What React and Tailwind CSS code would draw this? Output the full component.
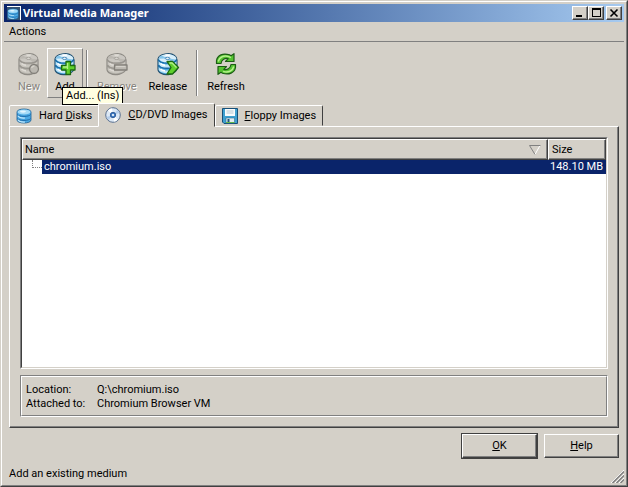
import React, { useState } from 'react';

const RAISED = 'border border-t-white border-l-white border-r-[#404040] border-b-[#404040]';

const palettes = {
    color: { line: '#24506f', top: '#d9effa', band: '#c3e6f8', shine: '#ffffff', side: '#4ba9df', dark: '#1a6ca8', mark: '#5fd02c', markShine: '#b4f08a', markLine: '#1c6a10' },
    gray: { line: '#8e8b85', top: '#cac7c1', band: '#c9c6bf', shine: '#dedbd5', side: '#b0ada6', dark: '#98958f', mark: '#bbb8b1', markShine: '#d4d1ca', markLine: '#827f79' },
};

const marks = {
    plus: 'M13 9.500h4.500v4h4.500v4.500h-4.500v4.500H13V18H8.500v-4.500H13z',
    minus: 'M9.500 13h12.500v5H9.500z',
    arrow: 'M11 9.500h5.500l6 6-6 6.500H11l4-6.500z',
    dot: 'M17 12.500a4.500 4.500 0 1 0 .01 0z',
};

const shines = {
    plus: 'M14.500 17v-6M10 15h4.500',
    minus: 'M11 14.500h9.500',
    arrow: 'M13.500 11h2.500l4.500 4.500',
    dot: 'M14.500 16a3 3 0 0 1 3-2',
};

const DiskIcon = ({ mark, gray, className }) => {
    const c = gray ? palettes.gray : palettes.color;
    return (
        <svg viewBox="0 0 24 24" className={className} aria-hidden="true">
            <path d="M2 7C3 2 14 0 18.500 3.500 20.500 5 21 6 21 8v9c-1 5-11 7-15.500 4.500C3 20.500 2 19 2 17z" fill={c.side} stroke={c.line} strokeWidth="1.200" />
            <path d="M2.700 9c2 5 15.500 4.500 17.700 0v3.500c-3 4.500-15 5-17.700.5zM2.700 15c2 5 15.500 4.500 17.700 0v2.500c-3 4.500-15 5-17.700.5z" fill={c.band} />
            <path d="M4.500 11.500c1 1 2.500 1.600 4.500 1.900M4.500 17c1 1 2.500 1.600 4.500 1.900" fill="none" stroke={c.shine} strokeWidth="1.600" />
            <path d="M2.500 13c2 4.500 15.500 4.500 18-.5M2.500 8c2 4 15.500 4 18 0" fill="none" stroke={c.dark} strokeWidth="1.500" />
            <ellipse cx="11.500" cy="6.300" rx="8.700" ry="4" fill={c.top} />
            <path d="M11.500 6.300 5.500 3.500C3.500 4.500 2.800 5.700 3 6.800zM11.500 6.300l8.300 1.200c-.8 1.300-2.300 2-4.300 2.400z" fill={c.side} opacity=".6" />
            <path d="M11.500 6.300 9 2.500c2-.3 4-.3 5.500 0z" fill={c.shine} />
            <ellipse cx="11.500" cy="6.300" rx="2.300" ry="1.100" fill={c.shine} stroke={c.dark} strokeWidth=".8" />
            {mark && <path d={marks[mark]} fill={c.mark} stroke={c.markLine} strokeWidth="1.300" strokeLinejoin="round" />}
            {mark && <path d={shines[mark]} fill="none" stroke={c.markShine} strokeWidth="1.300" />}
        </svg>
    );
};

// plain stack of platters, used where the icon is small
const StackIcon = ({ className }) => (
    <svg viewBox="0 0 16 16" className={className} aria-hidden="true">
        <path d="M1 4c0-4 14-4 14 0v8c0 4-14 4-14 0z" fill="#4ba9e4" stroke="#1c5e93" strokeWidth=".8" />
        <path d="M1.500 6.500c1 2.500 12 2.500 13 0M1.500 10.500c1 2.500 12 2.500 13 0" fill="none" stroke="#1a69a8" strokeWidth="1" />
        <path d="M2 7.800c1 2 5 2.300 7 2.200M2 11.800c1 2 5 2.300 7 2.200" fill="none" stroke="#c2e8fb" strokeWidth="1.200" />
        <ellipse cx="8" cy="4" rx="6.500" ry="2.500" fill="#a5dbf7" />
        <ellipse cx="7" cy="3.600" rx="3" ry="1.100" fill="#e2f5fe" />
    </svg>
);

const RefreshIcon = ({ className }) => (
    <svg viewBox="0 0 24 24" className={className} aria-hidden="true">
        <g fill="#55c431" stroke="#1c5c14" strokeWidth="1.200" strokeLinejoin="round">
            <path d="M2.500 11.500V8.500C3.500 3 9 .8 15.500 2.800l1.500.9 3-2V9.500h-8.500l2.700-2.800C11 5.800 7.500 7.500 7 11.500z" />
            <path d="M21.500 12.500v3c-1 5.500-6.500 7.700-13 5.700L7 20.300l-3 2V14.500h8.500l-2.700 2.800c3.200.9 6.700-.8 7.200-4.800z" />
        </g>
        <path d="M4.200 9.500C5.200 5 10 3 14.800 4.600l2.200 1M19.800 14.500c-1 4.500-5.800 6.500-10.600 4.900" fill="none" stroke="#b7f08d" strokeWidth="1.500" />
    </svg>
);

const CdIcon = () => (
    <svg viewBox="0 0 16 16" className="size-4" aria-hidden="true">
        <circle cx="8" cy="8" r="7.300" fill="#dce8f5" stroke="#5b7190" />
        <path d="M8 8 3 3.500A7 7 0 0 1 7 1.300zM8 8l5 4.500a7 7 0 0 1-4 2.200z" fill="#fff" />
        <path d="M8 8l6.500-2a7 7 0 0 0-2-3zM8 8l-6.500 2a7 7 0 0 0 2 3z" fill="#b5cdea" />
        <circle cx="8" cy="8" r="2.700" fill="#3f7cc4" stroke="#254f8c" strokeWidth=".8" />
        <circle cx="8" cy="8" r="1.100" fill="#fff" />
    </svg>
);

const FloppyIcon = () => (
    <svg viewBox="0 0 16 16" className="size-4" aria-hidden="true">
        <path d="M.5.500h15v15H2l-1.500-1.500z" fill="#3fa0d0" stroke="#174f78" />
        <path d="M3 1h10v7H3z" fill="#f8fbfd" />
        <path d="M4.500 3h7M4.500 5h7" stroke="#b4c6d0" />
        <path d="M4 10h8.500v5H4z" fill="#e4ecf0" stroke="#2b6e94" strokeWidth=".6" />
        <path d="M5.500 11h2v3.500h-2z" fill="#1c5478" />
        <path d="M4 14h8.500v1H4z" fill="#62b84a" />
    </svg>
);

const ToolButton = ({ label, icon, disabled, hot, children }) => (
    <div className="relative">
        <button
            type="button"
            disabled={disabled}
            className={`flex h-[50px] min-w-9 flex-col items-center gap-[3px] border px-[5px] pt-[3px] ${
                hot ? 'border-t-white border-l-white border-r-[#808080] border-b-[#808080]' : 'border-transparent'
            } ${disabled ? 'text-[#87847e] [text-shadow:1px_1px_0_#fff]' : ''}`}
        >
            {icon}
            <span className="leading-4">{label}</span>
        </button>
        {children}
    </div>
);

const Separator = () => <div className="mx-[3px] h-[46px] w-[2px] border-l border-r border-l-[#808080] border-r-white" />;

const tabs = [
    { id: 'hd', before: 'Hard ', key: 'D', after: 'isks', icon: <StackIcon className="size-4" /> },
    { id: 'cd', before: '', key: 'C', after: 'D/DVD Images', icon: <CdIcon /> },
    { id: 'fd', before: '', key: 'F', after: 'loppy Images', icon: <FloppyIcon /> },
];

const CaptionButton = ({ label, children }) => (
    <button type="button" aria-label={label} className={`h-[14px] w-4 bg-[#d4d0c8] shadow-[inset_-1px_-1px_0_#808080] ${RAISED}`}>
        <svg viewBox="0 0 14 12" className="h-3 w-[14px]" fill="none" stroke="#000" shapeRendering="crispEdges">
            {children}
        </svg>
    </button>
);

const App = () => {
    const [active, setActive] = useState('cd');

    return (
        <div className="flex min-h-screen flex-col border border-t-[#d4d0c8] border-l-[#d4d0c8] border-r-[#404040] border-b-[#404040] bg-[#d4d0c8] font-[Roboto,'Liberation_Sans',sans-serif] text-[11px] leading-[14px] text-black">
            <div className="flex grow flex-col border border-t-white border-l-white border-r-[#808080] border-b-[#808080] p-[2px]">
                <header className="flex h-[18px] items-center bg-linear-to-r from-[#0a246a] to-[#a6caf0] pr-[2px] pl-[3px]">
                    <span className="mr-[2px] flex size-[14px] items-center border-t border-r border-white bg-[#33506f]">
                        <StackIcon className="size-3" />
                    </span>
                    <h1 className="grow font-['Noto_Sans',sans-serif] font-bold text-white">Virtual Media Manager</h1>
                    <CaptionButton label="Minimize"><path d="M3 9h6" strokeWidth="2" /></CaptionButton>
                    <CaptionButton label="Maximize"><path d="M3 2h9M3.500 1v9M11.500 1v9M3 9.500h9" /><path d="M3 1.500h9" /></CaptionButton>
                    <span className="w-[2px]" />
                    <CaptionButton label="Close"><path d="M3.500 2.500l7 7M10.500 2.500l-7 7" strokeWidth="1.600" shapeRendering="auto" /></CaptionButton>
                </header>

                <nav className="flex h-5 items-center border-b border-[#808080] px-[5px]">
                    <button type="button">Actions</button>
                </nav>

                <div className="flex items-center pt-[6px] pl-[7px]">
                    <ToolButton label="New" disabled icon={<DiskIcon gray mark="dot" className="size-6" />} />
                    <ToolButton label="Add" hot icon={<DiskIcon mark="plus" className="size-6" />}>
                        <div role="tooltip" className="absolute top-[39px] left-[15px] z-10 border border-black bg-[#ffffe1] px-[3px] leading-4 whitespace-nowrap">
                            Add... (Ins)
                        </div>
                    </ToolButton>
                    <Separator />
                    <ToolButton label="Remove" disabled icon={<DiskIcon gray mark="minus" className="size-6" />} />
                    <ToolButton label="Release" icon={<DiskIcon mark="arrow" className="size-6" />} />
                    <Separator />
                    <ToolButton label="Refresh" icon={<RefreshIcon className="size-6" />} />
                </div>

                <main className="flex grow flex-col px-[5px] pt-[5px]">
                    <div role="tablist" className="flex items-end">
                        {tabs.map((tab) => (
                            <button
                                key={tab.id}
                                type="button"
                                role="tab"
                                aria-selected={active === tab.id}
                                onClick={() => setActive(tab.id)}
                                className={`flex items-center gap-[7px] rounded-t-[2px] border border-t-white border-l-white border-r-[#404040] bg-[#d4d0c8] ${
                                    active === tab.id ? 'relative z-10 -mb-px -ml-px h-6 border-b-[#d4d0c8] px-[6px]' : 'h-[21px] border-b-transparent px-[6px]'
                                }`}
                            >
                                {tab.icon}
                                <span>{tab.before}<u>{tab.key}</u>{tab.after}</span>
                            </button>
                        ))}
                    </div>

                    <section className={`flex grow flex-col gap-[6px] p-[10px] shadow-[inset_-1px_-1px_0_#808080] ${RAISED}`}>
                        <div className="flex grow flex-col border border-t-[#808080] border-l-[#808080] border-r-white border-b-white">
                            <div className="grow border border-t-[#404040] border-l-[#404040] border-r-[#d4d0c8] border-b-[#d4d0c8] bg-white">
                                <table className="w-full table-fixed border-separate border-spacing-0 text-left">
                                    <thead>
                                        <tr className="h-[21px] bg-[#d4d0c8]">
                                            <th className={`px-[2px] font-normal shadow-[inset_-1px_-1px_0_#808080] ${RAISED}`}>
                                                <div className="flex items-center justify-between">
                                                    Name
                                                    <svg viewBox="0 0 12 10" className="mr-1 h-[10px] w-3" fill="none" aria-hidden="true">
                                                        <path d="M11 .5 6 9.500" stroke="#fff" />
                                                        <path d="M11.500.500H.5L6 9.500" stroke="#808080" />
                                                    </svg>
                                                </div>
                                            </th>
                                            <th className={`w-[58px] px-[3px] font-normal shadow-[inset_-1px_-1px_0_#808080] ${RAISED}`}>Size</th>
                                        </tr>
                                    </thead>
                                    <tbody>
                                        <tr className="h-[14px] text-white">
                                            <td className="p-0">
                                                <div className="flex">
                                                    <span className="w-5 pl-[10px]">
                                                        <span className="block h-2 border-b border-l border-dotted border-[#808080]" />
                                                    </span>
                                                    <span className="grow bg-[#0a246a] pl-[2px]">chromium.iso</span>
                                                </div>
                                            </td>
                                            <td className="bg-[#0a246a] p-0 pr-[3px] text-right whitespace-nowrap">148.10 MB</td>
                                        </tr>
                                    </tbody>
                                </table>
                            </div>
                        </div>

                        <div className="border border-t-[#808080] border-l-[#808080] border-r-white border-b-white">
                            <dl className="grid grid-cols-[71px_1fr] border border-t-white border-l-white border-r-[#808080] border-b-[#808080] px-1 pt-[6px] pb-1">
                                <dt>Location:</dt>
                                <dd>Q:\chromium.iso</dd>
                                <dt>Attached to:</dt>
                                <dd>Chromium Browser VM</dd>
                            </dl>
                        </div>
                    </section>
                </main>

                <div className="flex justify-end gap-[6px] px-[5px] pt-[5px]">
                    <div className="border border-[#404040]">
                        <button type="button" className={`h-6 w-[75px] shadow-[inset_-1px_-1px_0_#808080] ${RAISED}`}><u>O</u>K</button>
                    </div>
                    <button type="button" className={`my-px h-6 w-[75px] shadow-[inset_-1px_-1px_0_#808080] ${RAISED}`}><u>H</u>elp</button>
                </div>

                <footer className="flex items-end justify-between pt-2 pl-[5px]">
                    <span className="pb-[2px]">Add an existing medium</span>
                    <svg viewBox="0 0 13 13" className="size-[13px]" aria-hidden="true">
                        <path d="M0 13 13 0M4 13l9-9M8 13l5-5" stroke="#fff" />
                        <path d="M1.500 13 13 1.500M5.500 13 13 5.500M9.500 13 13 9.500" stroke="#808080" strokeWidth="1.500" />
                    </svg>
                </footer>
            </div>
        </div>
    );
};

export default App;
